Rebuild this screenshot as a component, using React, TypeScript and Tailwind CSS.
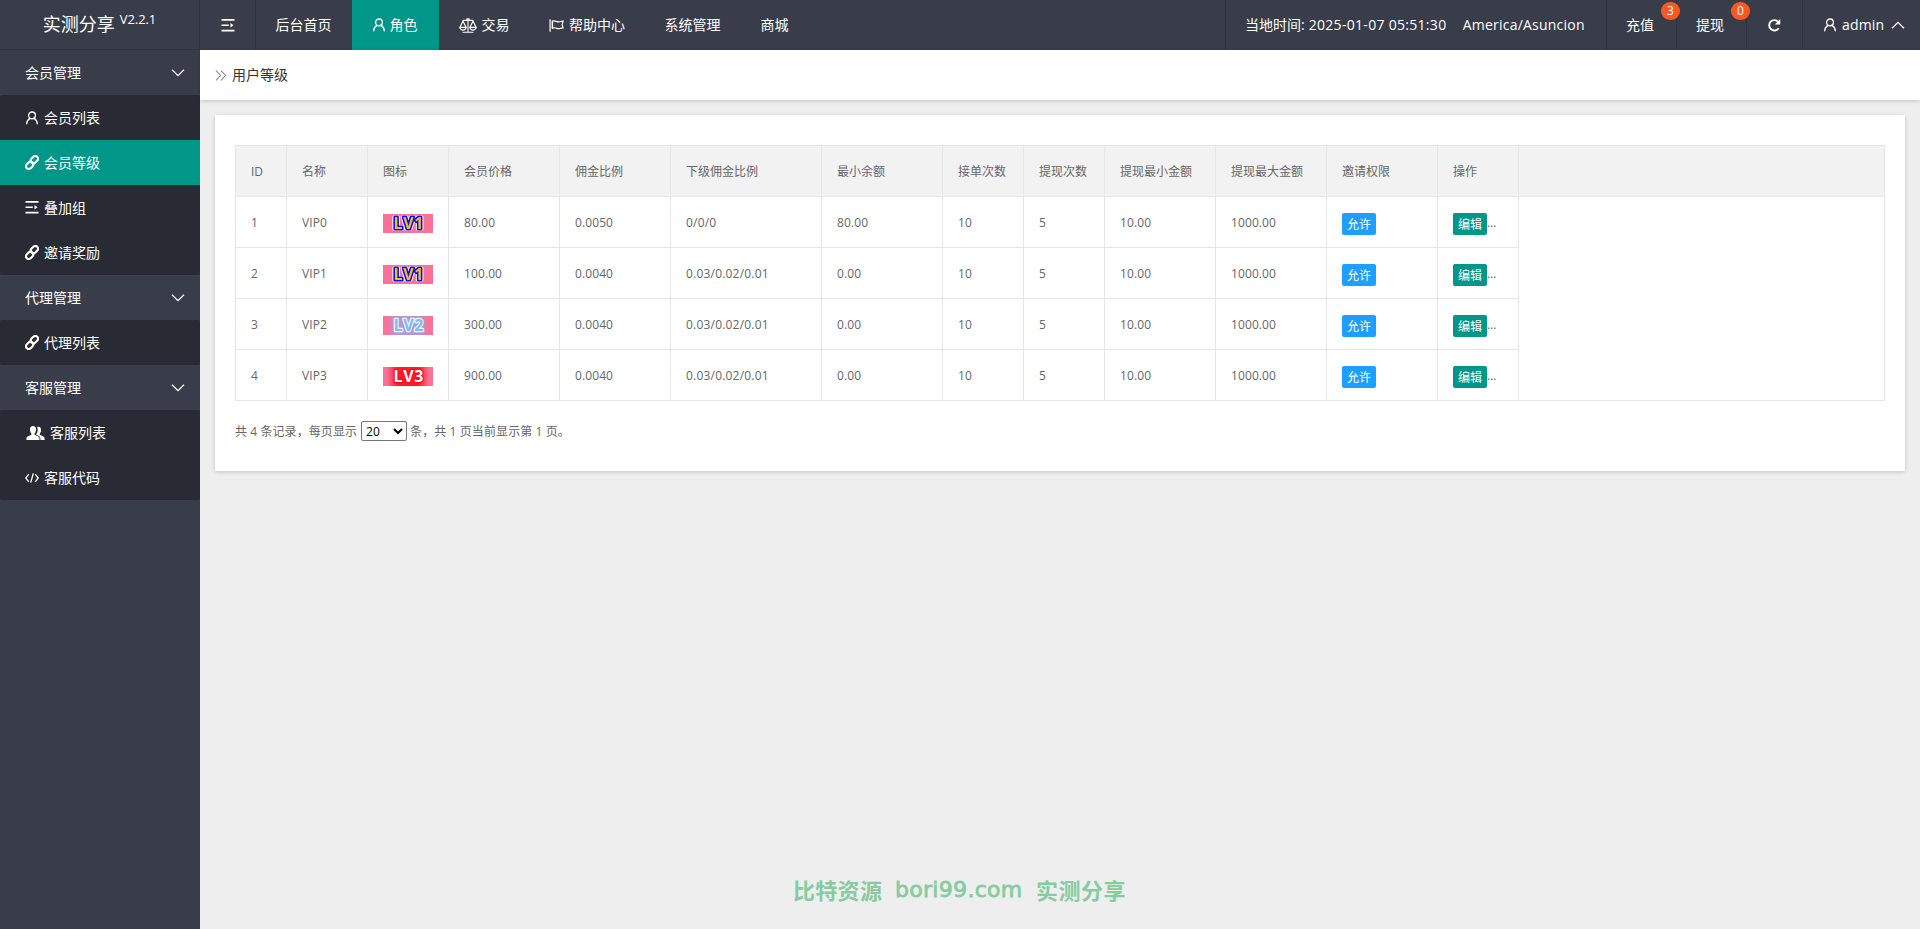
import type { ReactNode } from "react";
import clsx from "clsx";

const UserIcon = () => (
    <svg width="12" height="14" viewBox="0 0 12 14" fill="none" stroke="currentColor" strokeWidth="1.3" strokeLinecap="round">
        <circle cx="6" cy="4.4" r="3.4" />
        <path d="M4 7.3C2 8.3.8 10.2.7 12.8M8 7.3c2 1 3.2 2.9 3.3 5.5" />
    </svg>
);

const LinkIcon = () => (
    <svg width="14" height="15" viewBox="0 0 14 15" fill="none" stroke="currentColor" strokeWidth="2.1" strokeLinecap="round">
        <rect x="5.4" y="1.9" width="8" height="5.4" rx="2.7" transform="rotate(-45 9.4 4.6)" />
        <rect x="0.6" y="7.7" width="8" height="5.4" rx="2.7" transform="rotate(-45 4.6 10.4)" />
    </svg>
);

const MenuIcon = () => (
    <svg width="14" height="13" viewBox="0 0 14 13" fill="currentColor">
        <path d="M.5 0h13v1.7H.5zM.5 5.4h7.3v1.6H.5zM.5 10.8h13v1.7H.5zM9.5 4l3 2.2-3 2.2z" />
    </svg>
);

const ScaleIcon = () => (
    <svg width="18" height="15" viewBox="0 0 18 15" fill="none" stroke="currentColor" strokeWidth="1.1" strokeLinecap="round" strokeLinejoin="round">
        <path d="M9 .6v13M4 14.2h10M4 2.4h10M7.500 1h3M4 2.900L1 9.200M4 2.900l3 6.300M14 2.900l-3 6.300M14 2.900l3 6.300" />
        <path d="M.8 9.400h6.400c-.4 1.900-1.500 2.700-3.200 2.700s-2.800-.8-3.200-2.700zM10.800 9.400h6.400c-.4 1.900-1.500 2.700-3.200 2.700s-2.800-.8-3.200-2.700z" />
    </svg>
);

const FlagIcon = () => (
    <svg width="15" height="13" viewBox="0 0 15 13" fill="none" stroke="currentColor" strokeWidth="1.2">
        <path d="M1.100.3v12.400M3.500 2.200c2.500-1.200 4 .9 6 .7 1.600-.1 2.700-.8 4.600-.8l-1 3.600 1 3.200c-1.900 0-3 .8-4.600.8-2 0-3.500-1.800-6-.6z" />
        <path d="M3.300 1.600v8" />
    </svg>
);

const UsersIcon = () => (
    <svg width="19" height="14" viewBox="0 0 19 14" fill="currentColor">
        <path d="M7 0c2 0 3.100 1.400 3.100 3.500 0 1.600-.6 3-1.500 3.900v1.300c1.600.9 4.700 1.600 4.900 3.500V14H.4v-1.800c.2-1.900 3.400-2.600 5-3.500V7.400C4.500 6.500 3.900 5.100 3.900 3.500 3.900 1.400 5 0 7 0z" />
        <path d="M11.200.9c2.600-.9 4 .8 3.900 3.100 0 1.400-.5 2.600-1.300 3.400v1.300c1.500.9 4.600 1.500 4.800 3.300v2h-4.200v-2c-.1-1.700-2.300-2.500-4.100-3.300V7.900c1.300-1.300 2-4.400.9-7z" />
    </svg>
);

const CodeIcon = () => (
    <svg width="14" height="10" viewBox="0 0 14 10" fill="none" stroke="currentColor" strokeWidth="1.300">
        <path d="M3.800 1.200L.8 5l3 3.800M10.200 1.200l3 3.800-3 3.800M8.300.3L5.700 9.700" />
    </svg>
);

const RefreshIcon = () => (
    <svg width="14" height="13" viewBox="0 0 14 13" fill="none" stroke="currentColor" strokeWidth="1.900">
        <path d="M11.300 2.900A5.200 5.200 0 1 0 11.700 9.200" />
        <path d="M13.300 0v5.600H7.800z" fill="currentColor" stroke="none" />
    </svg>
);

const Chevron = ({ up }: { up?: boolean }) => (
    <svg width="14" height="8" viewBox="0 0 14 8" fill="none" stroke="currentColor" strokeWidth="1.300" className={clsx(up && "rotate-180")}>
        <path d="M1 .8l6 5.800 6-5.800" />
    </svg>
);

const navs: { label: string; width: string; icon?: ReactNode; active?: boolean }[] = [
    { label: "后台首页", width: "w-24" },
    { label: "角色", width: "w-[87px]", icon: <UserIcon />, active: true },
    { label: "交易", width: "w-[91px]", icon: <ScaleIcon /> },
    { label: "帮助中心", width: "w-[115px]", icon: <FlagIcon /> },
    { label: "系统管理", width: "w-24" },
    { label: "商城", width: "w-[68px]" },
];

const menus: { title: string; items: { label: string; icon: ReactNode; active?: boolean }[] }[] = [
    {
        title: "会员管理",
        items: [
            { label: "会员列表", icon: <UserIcon /> },
            { label: "会员等级", icon: <LinkIcon />, active: true },
            { label: "叠加组", icon: <MenuIcon /> },
            { label: "邀请奖励", icon: <LinkIcon /> },
        ],
    },
    { title: "代理管理", items: [{ label: "代理列表", icon: <LinkIcon /> }] },
    {
        title: "客服管理",
        items: [
            { label: "客服列表", icon: <span className="pl-px"><UsersIcon /></span> },
            { label: "客服代码", icon: <CodeIcon /> },
        ],
    },
];

const columns = ["ID", "名称", "图标", "会员价格", "佣金比例", "下级佣金比例", "最小余额", "接单次数", "提现次数", "提现最小金额", "提现最大金额", "邀请权限", "操作"];

const rows = [
    { id: 1, name: "VIP0", level: 1, price: "80.00", rate: "0.0050", sub: "0/0/0", min: "80.00" },
    { id: 2, name: "VIP1", level: 1, price: "100.00", rate: "0.0040", sub: "0.03/0.02/0.01", min: "0.00" },
    { id: 3, name: "VIP2", level: 2, price: "300.00", rate: "0.0040", sub: "0.03/0.02/0.01", min: "0.00" },
    { id: 4, name: "VIP3", level: 3, price: "900.00", rate: "0.0040", sub: "0.03/0.02/0.01", min: "0.00" },
];

const gridCols = "grid grid-cols-[51px_81px_81px_111px_111px_151px_121px_81px_81px_111px_111px_111px_81px]";

const LevelIcon = ({ level }: { level: number }) => {
    const text = { x: 25.5, y: 15.4, textAnchor: "middle" as const, fontSize: 16, textLength: 30, strokeLinejoin: "round" as const };
    return (
        <svg width="50" height="19" viewBox="0 0 50 19" className="mt-px overflow-visible font-bold">
            <defs>
                <linearGradient id={`glow${level}`}>
                    <stop offset="0.08" stopColor="#fb7299" />
                    <stop offset="0.28" stopColor={level === 2 ? "#b39ad0" : "#fd1c2c"} />
                    <stop offset="0.72" stopColor={level === 2 ? "#b39ad0" : "#fd1c2c"} />
                    <stop offset="0.92" stopColor="#fb7299" />
                </linearGradient>
            </defs>
            <rect width="50" height="19" fill={level === 1 ? "#fb7299" : `url(#glow${level})`} />
            {level === 1 && (
                <text {...text} fill="#f5bd1b" stroke="#0b0bf0" strokeWidth="3.2" className="[paint-order:stroke] [filter:drop-shadow(1px_0_0_#fff)_drop-shadow(-1px_0_0_#fff)]">LV1</text>
            )}
            {level === 2 && <text {...text} fill="#74c0ff" stroke="#eef5ff" strokeWidth="2.4" className="[paint-order:stroke]">LV2</text>}
            {level === 3 && <text {...text} fill="#fff" stroke="#ff0a12" strokeWidth="2.4" className="[paint-order:stroke]">LV3</text>}
        </svg>
    );
};

const Cell = ({ children }: { children?: ReactNode }) => (
    <div className="flex h-[51px] items-center whitespace-nowrap border-r border-b border-[#e6e6e6] pl-[15px] pt-[2px] tracking-[0.1px]">{children}</div>
);

const Tag = ({ children, className }: { children: ReactNode; className: string }) => (
    <span className={clsx("mt-[2px] h-[22px] w-[34px] rounded-[2px] text-center leading-[23px] tracking-normal text-white", className)}>{children}</span>
);

const Header = () => (
    <header className="flex h-[50px] bg-[#393d49] text-white">
        <div className="flex w-[200px] justify-center border-r border-b border-[#30333d] text-[18px] leading-[49px]">
            实测分享<span className="ml-[5px] mt-[-5px] text-[13px] tracking-[-0.1px]">V2.2.1</span>
        </div>
        <div className="flex w-14 items-center justify-center border-r border-[#30333d]"><MenuIcon /></div>
        <nav className="flex">
            {navs.map((n) => (
                <div key={n.label} className={clsx("flex items-center justify-center gap-[5px] whitespace-nowrap pr-px", n.width, n.active && "bg-[#009688]")}>
                    {n.icon}
                    <span>{n.label}</span>
                </div>
            ))}
        </nav>
        <div className="ml-auto flex">
            <div className="flex w-[382px] items-center whitespace-nowrap border-x border-[#30333d] pl-[19px]">
                当地时间:
                <span className="ml-1 w-[154px] tracking-[0.3px]">2025-01-07 05:51:30</span>
                <span className="tracking-[0.22px]">America/Asuncion</span>
            </div>
            {[["充值", "3"], ["提现", "0"]].map(([label, count]) => (
                <div key={label} className="relative flex w-[70px] items-center border-r border-[#30333d] pl-[19px]">
                    {label}
                    <span className="absolute left-[54px] top-[2px] h-[18px] w-[19px] rounded-full bg-[#ff5722] text-center text-xs leading-[18px]">{count}</span>
                </div>
            ))}
            <div className="flex w-14 items-center justify-center border-r border-[#30333d] pr-[2px]"><RefreshIcon /></div>
            <div className="flex w-[117px] items-center pl-[21px]">
                <UserIcon />
                <span className="ml-[6px] w-[49px] tracking-[0.15px]">admin</span>
                <Chevron up />
            </div>
        </div>
    </header>
);

const Sidebar = () => (
    <aside className="w-[200px] shrink-0 bg-[#393d49] text-white">
        {menus.map((m) => (
            <div key={m.title}>
                <div className="flex h-[45px] items-center justify-between pl-[25px] pr-[15px]">
                    {m.title}
                    <Chevron />
                </div>
                <ul className="overflow-hidden rounded-[2px] bg-[#282b33]">
                    {m.items.map((it) => (
                        <li key={it.label} className={clsx("flex h-[45px] items-center gap-[5px] pl-[25px]", it.active && "bg-[#009688]")}>
                            <span className="flex min-w-[14px] justify-center">{it.icon}</span>
                            {it.label}
                        </li>
                    ))}
                </ul>
            </div>
        ))}
    </aside>
);

const LevelTable = () => (
    <div className="border border-[#e6e6e6]">
        <div className="h-[51px] border-b border-[#e6e6e6] bg-[#f2f2f2]">
            <div className={gridCols}>
                {columns.map((c) => <Cell key={c}><span className="tracking-normal">{c}</span></Cell>)}
            </div>
        </div>
        <div className="-mb-px">
            {rows.map((r) => (
                <div key={r.id} className={gridCols}>
                    <Cell>{r.id}</Cell>
                    <Cell>{r.name}</Cell>
                    <Cell><LevelIcon level={r.level} /></Cell>
                    <Cell>{r.price}</Cell>
                    <Cell>{r.rate}</Cell>
                    <Cell><span className="tracking-[0.2px]">{r.sub}</span></Cell>
                    <Cell>{r.min}</Cell>
                    <Cell>10</Cell>
                    <Cell>5</Cell>
                    <Cell>10.00</Cell>
                    <Cell>1000.00</Cell>
                    <Cell><Tag className="bg-[#1e9fff]">允许</Tag></Cell>
                    <Cell><Tag className="bg-[#009688]">编辑</Tag><span className="-mt-px tracking-[-0.4px]">…</span></Cell>
                </div>
            ))}
        </div>
    </div>
);

const App = () => {
    return (
        <div className="flex h-[929px] w-[1920px] flex-col overflow-hidden bg-[#eee] font-['Open_Sans','Noto_Sans_CJK_SC',sans-serif] text-sm">
            <Header />
            <div className="flex flex-1">
                <Sidebar />
                <main className="flex flex-1 flex-col">
                    <div className="flex h-[50px] items-center bg-white pl-[15px] pb-2 text-[#333] shadow-[0_1px_4px_rgba(0,0,0,0.18)]">
                        <svg width="12" height="11" viewBox="0 0 12 11" fill="none" stroke="#888" strokeWidth="1.1" className="mt-2">
                            <path d="M1 .6l4.500 4.900L1 10.400M6 .6l4.500 4.900L6 10.400" />
                        </svg>
                        <span className="ml-[5px] mt-[7px]">用户等级</span>
                    </div>
                    {/* 等级列表 */}
                    <div className="mx-[15px] mt-[15px] h-[356px] bg-white px-5 pt-[30px] text-xs text-[#666] shadow-[0_1px_4px_rgba(0,0,0,0.18)]">
                        <LevelTable />
                        <div className="mt-5 flex h-5 items-center whitespace-pre">
                            <span className="mt-px tracking-[0.08px]">共 4 条记录，每页显示</span>
                            <select className="ml-1 mr-[3px] h-5 w-[46px] rounded-[2px] border border-[#767676] bg-white text-[12px] text-black">
                                <option>20</option>
                            </select>
                            <span className="mt-px tracking-[0.1px]">条，共 1 页当前显示第 1 页。</span>
                        </div>
                    </div>
                    <div className="mt-auto flex h-[54px] pl-[593px] text-[22px] leading-[30px] font-bold whitespace-nowrap text-[#86cca0]">
                        <span className="w-[102px] tracking-[0.3px]">比特资源</span>
                        <span className="w-[141px] text-[22px] tracking-[0.3px] [font-family:'DejaVu_Sans',sans-serif] [font-weight:400] [-webkit-text-stroke:0.8px_#86cca0]">bori99.com</span>
                        <span className="tracking-[0.5px]">实测分享</span>
                    </div>
                </main>
            </div>
        </div>
    );
};

export default App;
